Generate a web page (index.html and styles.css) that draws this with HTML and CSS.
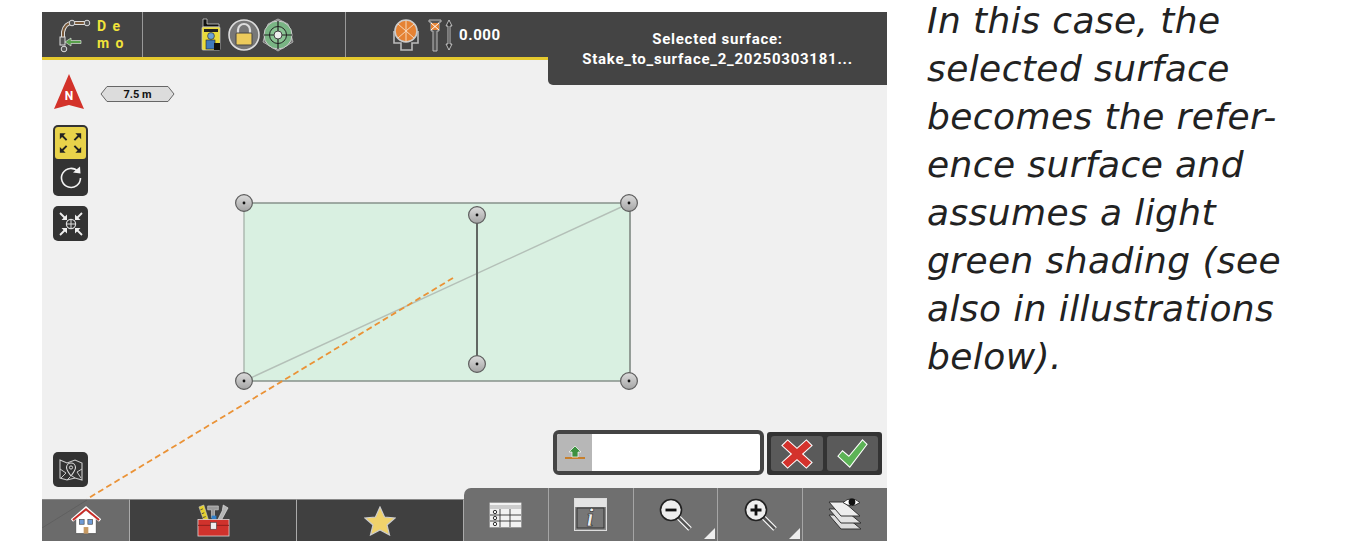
FILE: index.html
```html
<!DOCTYPE html>
<html lang="en">
<head>
    <meta charset="UTF-8">
    <title>Selected surface</title>
    <link rel="stylesheet" href="styles.css">
</head>
<body>
    <div class="page">
        <div class="app">
            <!-- Top status bar -->
            <div class="top-bar">
                <div class="top-cell job-cell">
                    <svg width="38" height="36" viewBox="0 0 38 36">
                        <path d="M29 6H14Q7 6 5 15V28" fill="none" stroke="#ddd" stroke-width="4"/>
                        <path d="M29 6H14Q7 6 5 15V28" fill="none" stroke="#7a5a3a" stroke-width="2"/>
                        <circle cx="29" cy="6" r="2.8" fill="#555" stroke="#ddd"/>
                        <circle cx="14" cy="6" r="2.8" fill="#555" stroke="#ddd"/>
                        <rect x="2" y="20" width="5" height="8" fill="#555" stroke="#ddd"/>
                        <circle cx="6" cy="32" r="2.8" fill="#555" stroke="#ddd"/>
                        <path d="M23 23.500H13V21L7 25L13 29V26.500H23Z" fill="#58a04c" stroke="#ddd" stroke-width=".7"/>
                    </svg>
                    <span class="job-name">D e<br>m o</span>
                </div>
                <div class="top-cell device-cell">
                    <svg class="device-icon" width="24" height="33" viewBox="0 0 24 33">
                        <path d="M4 1H8V6H20V9H4Z" fill="#111" stroke="#ddd" stroke-width=".7"/>
                        <rect x="3" y="9" width="18" height="23" rx="1" fill="#eadb3a" stroke="#ccc" stroke-width=".7"/>
                        <rect x="5" y="11" width="14" height="3" fill="#222"/>
                        <circle cx="12" cy="18" r="3.4" fill="#6aa3d8" stroke="#333" stroke-width=".7"/>
                        <rect x="7" y="22" width="9" height="9" fill="#3f79bd" stroke="#222" stroke-width=".6"/>
                        <rect x="15" y="25" width="6" height="7" fill="#111"/>
                    </svg>
                    <svg width="32" height="32" viewBox="0 0 32 32">
                        <circle cx="16" cy="16" r="15" fill="#777" stroke="#ddd" stroke-width="1.6"/>
                        <path d="M10 15V11a6 6 0 0 1 12 0v4" fill="none" stroke="#ddd" stroke-width="2.2"/>
                        <rect x="8" y="14" width="16" height="12" rx="1" fill="#eccb5c" stroke="#444"/>
                    </svg>
                    <svg width="32" height="34" viewBox="0 0 32 34">
                        <path d="M16 1L26 6L31 24L16 33L1 24L6 6Z" fill="#777" stroke="#aaa"/>
                        <circle cx="16" cy="17" r="14" fill="#79b584" stroke="#ccc"/>
                        <circle cx="16" cy="17" r="8.5" fill="#8ac494" stroke="#222"/>
                        <path d="M2 17H30M16 3V31" stroke="#222" stroke-width="1.2"/>
                        <circle cx="16" cy="17" r="4" fill="#eee" stroke="#444"/>
                    </svg>
                </div>
                <div class="top-cell target-cell">
                    <svg width="30" height="34" viewBox="0 0 30 34">
                        <path d="M3 13V25H10V32H21V25H27V13" fill="none" stroke="#bbb" stroke-width="1.6"/>
                        <circle cx="15" cy="13" r="11" fill="#e58233" stroke="#ccc" stroke-width="1.6"/>
                        <path d="M7 6L23 20M23 6L7 20M15 2V24" stroke="#f6d9bd" stroke-width="1"/>
                    </svg>
                    <svg class="pole" width="14" height="34" viewBox="0 0 14 34">
                        <path d="M1 2H13V4H11V13H9V33H5V13H3V4H1Z" fill="#555" stroke="#bbb"/>
                        <rect x="3" y="5" width="8" height="7" fill="#e58233"/>
                        <path d="M3 5L11 12M11 5L3 12" stroke="#fff"/>
                    </svg>
                    <svg width="8" height="32" viewBox="0 0 8 32">
                        <path d="M4 1L7 7H5V25H7L4 31L1 25H3V7H1Z" fill="#333" stroke="#ddd" stroke-width=".8"/>
                    </svg>
                    <span class="height-value">0.000</span>
                </div>
            </div>

            <!-- Selected surface popup -->
            <div class="surface-popup">
                <div>Selected surface:</div>
                <div>Stake_to_surface_2_20250303181...</div>
            </div>

            <!-- Map canvas -->
            <div class="map">
                <svg class="map-drawing" width="845" height="439" viewBox="42 60 845 439">
                    <defs>
                        <linearGradient id="node-fill" x1="0" y1="0" x2="0" y2="1">
                            <stop offset="0" stop-color="#dcdcdc"/>
                            <stop offset="1" stop-color="#a4a4a4"/>
                        </linearGradient>
                    </defs>
                    <rect x="244" y="203" width="386" height="178" fill="#d9f0e1"/>
                    <path d="M244 203H630V381H244" fill="none" stroke="#87918b" stroke-width="1.4"/>
                    <path d="M244 203V381" stroke="#a9b5ad" stroke-width="1.4"/>
                    <path d="M630 203V381" stroke="#8a938d" stroke-width="1.2"/>
                    <path d="M244 381L630 203" stroke="#b4c0b8" stroke-width="1.4"/>
                    <path d="M477 215V364" stroke="#616763" stroke-width="2"/>
                    <path d="M453 278L87 499" stroke="#ea9236" stroke-width="1.8" stroke-dasharray="6 3.5"/>
                    <g fill="url(#node-fill)" stroke="#5d5d5d" stroke-width="1.2">
                        <circle cx="244" cy="203" r="8.4"/>
                        <circle cx="629" cy="203" r="8.4"/>
                        <circle cx="477" cy="215" r="8.4"/>
                        <circle cx="477" cy="364" r="8.4"/>
                        <circle cx="244" cy="381" r="8.4"/>
                        <circle cx="629" cy="381" r="8.4"/>
                    </g>
                    <g fill="#111">
                        <circle cx="244" cy="203" r="1.4"/>
                        <circle cx="629" cy="203" r="1.4"/>
                        <circle cx="477" cy="215" r="1.4"/>
                        <circle cx="477" cy="364" r="1.4"/>
                        <circle cx="244" cy="381" r="1.4"/>
                        <circle cx="629" cy="381" r="1.4"/>
                    </g>
                </svg>

                <svg class="north-arrow" width="32" height="36" viewBox="0 0 32 36">
                    <path d="M16 1L31 36L16 32L1 36Z" fill="#d3322a"/>
                    <text x="16" y="27" class="north-letter" text-anchor="middle">N</text>
                </svg>

                <svg class="scale-bar" width="75" height="16" viewBox="0 0 75 16">
                    <path d="M1 8L7 .5H68L74 8L68 15.500H7Z" fill="#dcdcdc" stroke="#666"/>
                    <text x="37.500" y="12" class="scale-label" text-anchor="middle">7.5 m</text>
                </svg>

                <div class="tool-group zoom-tools">
                    <div class="tool-active">
                        <svg width="32" height="30" viewBox="0 0 32 30">
                            <path d="M7 7L12 12M25 7L20 12M7 23L12 18M25 23L20 18" stroke="#222" stroke-width="2"/>
                            <path d="M5 5H11L5 11ZM27 5H21L27 11ZM5 25H11L5 19ZM27 25H21L27 19Z" fill="#222"/>
                        </svg>
                    </div>
                    <div class="tool-plain">
                        <svg width="26" height="26" viewBox="0 0 26 26">
                            <path d="M20 6.5A9.5 9.5 0 1 0 22.5 13" fill="none" stroke="#f2f2f2" stroke-width="1.6"/>
                            <path d="M15 7.5L22.5 8.5L22 1.5Z" fill="#f2f2f2"/>
                        </svg>
                    </div>
                </div>

                <div class="tool-group center-tool">
                    <svg width="30" height="30" viewBox="0 0 30 30">
                        <path d="M4 4L10 10M26 4L20 10M4 26L10 20M26 26L20 20" stroke="#eee" stroke-width="1.8"/>
                        <path d="M11 11H5.5L11 5.5ZM19 11H24.5L19 5.5ZM11 19H5.5L11 24.5ZM19 19H24.5L19 24.5Z" fill="#eee"/>
                        <circle cx="15" cy="15" r="4.6" fill="none" stroke="#ddd" stroke-width="1.2"/>
                        <path d="M15 10V20M10 15H20" stroke="#ddd"/>
                    </svg>
                </div>

                <div class="tool-group map-tool">
                    <svg width="26" height="26" viewBox="0 0 26 26">
                        <path d="M2 3L9 6L17 3L24 6V23L17 21L9 23L2 21Z" fill="none" stroke="#ccc" stroke-width="1.1"/>
                        <path d="M2 12L8 16L3 21M24 12L19 15L23 21M9 23L12 20M17 21L14 19" fill="none" stroke="#ccc"/>
                        <path d="M13 19C10 15 8.5 13 8.5 10.5a4.5 4.5 0 0 1 9 0C17.5 13 16 15 13 19Z" fill="#333" stroke="#ddd" stroke-width="1.1"/>
                        <circle cx="13" cy="10.5" r="1.6" fill="none" stroke="#ddd"/>
                    </svg>
                </div>

                <div class="code-input">
                    <div class="code-icon">
                        <svg width="22" height="16" viewBox="0 0 22 16">
                            <path d="M1 13H21" stroke="#c77f2c" stroke-width="2"/>
                            <path d="M11 1L17 7H14V12H8V7H5Z" fill="#3d9140" stroke="#fff" stroke-width=".7"/>
                        </svg>
                    </div>
                </div>

                <div class="confirm-group">
                    <div class="confirm-btn">
                        <svg width="34" height="32" viewBox="0 0 36 34">
                            <path d="M8 2L18 11L28 2L34 8L24 17L34 26L28 32L18 23L8 32L2 26L12 17L2 8Z" fill="#d4322c" stroke="#fff" stroke-width="1.1"/>
                        </svg>
                    </div>
                    <div class="confirm-btn">
                        <svg width="31" height="31" viewBox="0 0 34 34">
                            <path d="M28 2L33 7L14 32L1 20L6 14L13 20Z" fill="#5cb356" stroke="#fff" stroke-width="1.1"/>
                        </svg>
                    </div>
                </div>
            </div>

            <!-- Bottom bar -->
            <div class="bottom-bar">
                <div class="nav-cell nav-home">
                    <svg class="home-trace" width="87" height="28" viewBox="0 0 87 28">
                        <path d="M45 0L0 28" stroke="#606060"/>
                    </svg>
                    <svg class="home-icon" width="30" height="29" viewBox="0 0 32 30">
                        <path d="M5 13L16 4L27 13V29H5Z" fill="#fff" stroke="#555"/>
                        <path d="M1 15L16 2L31 15" fill="none" stroke="#fff" stroke-width="3.6"/>
                        <path d="M2 14.500L16 3L30 14.500" fill="none" stroke="#c92a25" stroke-width="2"/>
                        <rect x="9" y="14" width="5" height="5" fill="#6f9bd6" stroke="#444" stroke-width=".7"/>
                        <rect x="18" y="14" width="5" height="5" fill="#6f9bd6" stroke="#444" stroke-width=".7"/>
                        <rect x="13.500" y="22" width="5" height="7" fill="#c79a63"/>
                    </svg>
                </div>
                <div class="nav-cell nav-wide">
                    <svg width="33" height="33" viewBox="0 0 34 34">
                        <path d="M2 3L7 1L12 17H7Z" fill="#e6d22e" stroke="#ccc" stroke-width=".6"/>
                        <path d="M3.500 6L6 5M5 10L7.500 9M6 14L9 13" stroke="#333" stroke-width=".8"/>
                        <path d="M11 2H22V6H18V14H15V6H11Z" fill="#9a9a9a" stroke="#ddd" stroke-width=".6"/>
                        <path d="M27 1L32 4L25 17H21L26 7Z" fill="#b5b5b5" stroke="#eee" stroke-width=".6"/>
                        <rect x="15" y="12" width="5" height="5" fill="#2f7fc8"/>
                        <rect x="1" y="16" width="32" height="17" fill="#d0322c" stroke="#ddd" stroke-width=".8"/>
                        <path d="M1 22H33" stroke="#8c1f1b"/>
                        <rect x="14" y="19" width="6" height="7" fill="#eee" stroke="#444" stroke-width=".6"/>
                    </svg>
                </div>
                <div class="nav-cell nav-wide">
                    <svg width="32" height="30" viewBox="0 0 32 30">
                        <path d="M16 1L20.500 11L31 12L23 19L25.500 29L16 24L6.500 29L9 19L1 12L11.500 11Z" fill="#f0d26b" stroke="#ccc" stroke-width="1.200"/>
                    </svg>
                </div>
                <div class="nav-panel">
                    <div class="panel-cell">
                        <svg width="33" height="26" viewBox="0 0 33 26">
                            <rect x=".5" y=".5" width="32" height="25" rx="1" fill="#f2f2f2" stroke="#999"/>
                            <path d="M1 5H32" stroke="#ccc" stroke-width="4"/>
                            <path d="M1 13H32M1 19H32M11 7V25M21 7V25" stroke="#333" stroke-width=".9"/>
                            <circle cx="6" cy="10" r="1.700" fill="none" stroke="#333"/>
                            <circle cx="6" cy="16" r="1.700" fill="none" stroke="#333"/>
                            <circle cx="6" cy="22" r="1.700" fill="none" stroke="#333"/>
                        </svg>
                    </div>
                    <div class="panel-cell">
                        <svg width="33" height="33" viewBox="0 0 33 33">
                            <rect x=".5" y=".5" width="32" height="32" fill="#8a8a8a" stroke="#ddd"/>
                            <rect x="1" y="1" width="31" height="8" fill="#e4e4e4"/>
                            <rect x="3" y="10" width="27" height="20" fill="#777" stroke="#333"/>
                            <text x="16" y="28" class="info-letter" text-anchor="middle">i</text>
                        </svg>
                    </div>
                    <div class="panel-cell panel-menu">
                        <svg width="33" height="33" viewBox="0 0 33 33">
                            <path d="M19 19L31 31" stroke="#fff" stroke-width="5"/>
                            <path d="M19 19L31 31" stroke="#555" stroke-width="2.600"/>
                            <circle cx="12" cy="12" r="10.500" fill="#eee" stroke="#222" stroke-width="1.600"/>
                            <path d="M6.500 12H17.500" stroke="#111" stroke-width="2.800"/>
                        </svg>
                    </div>
                    <div class="panel-cell panel-menu">
                        <svg width="33" height="33" viewBox="0 0 33 33">
                            <path d="M19 19L31 31" stroke="#fff" stroke-width="5"/>
                            <path d="M19 19L31 31" stroke="#555" stroke-width="2.600"/>
                            <circle cx="12" cy="12" r="10.500" fill="#eee" stroke="#222" stroke-width="1.600"/>
                            <path d="M6.500 12H17.500M12 6.500V17.500" stroke="#111" stroke-width="2.800"/>
                        </svg>
                    </div>
                    <div class="panel-cell">
                        <svg width="34" height="33" viewBox="0 0 34 33">
                            <path d="M1 17L16 17L33 31H13Z" fill="#ddd" stroke="#333"/>
                            <path d="M1 11L16 11L33 25H13Z" fill="#e4e4e4" stroke="#333"/>
                            <path d="M1 4L16 4L32 18H13Z" fill="#eee" stroke="#333"/>
                            <path d="M15 4.500Q23 -3 32 4.500Q23 11 15 4.500Z" fill="#fff" stroke="#333"/>
                            <circle cx="24" cy="4" r="3.400" fill="#111"/>
                        </svg>
                    </div>
                </div>
            </div>
        </div>

        <p class="note">In this case, the<br>selected surface<br>becomes the refer-<br>ence surface and<br>assumes a light<br>green shading (see<br>also in illustrations<br>below).</p>
    </div>
</body>
</html>
```

FILE: styles.css
```css
body {
    margin: 0;
    background-color: #fff;
    font-family: Roboto, sans-serif;
}
.page {
    display: flex;
    align-items: flex-start;
    padding: 12px 0 0 42px;
}
.app {
    position: relative;
    display: flex;
    flex-direction: column;
    flex: none;
    width: 845px;
    height: 529px;
    background-color: #f0f0f0;
}

/* top bar */
.top-bar {
    display: flex;
    flex: none;
    height: 45px;
    background-color: #444;
    border-bottom: 3px solid #e5c92e;
}
.top-cell {
    display: flex;
    align-items: center;
    box-sizing: border-box;
    border-right: 1px solid #999;
}
.job-cell {
    width: 101px;
    padding-left: 16px;
    gap: 1px;
}
.job-name {
    color: #f2e33a;
    font-size: 14px;
    font-weight: 700;
    line-height: 17px;
    letter-spacing: 1.5px;
}
.device-cell {
    width: 203px;
    padding-left: 56px;
    gap: 2px;
}
.device-icon {
    margin-right: 3px;
}
.target-cell {
    width: 203px;
    padding-left: 45px;
    gap: 3px;
}
.height-value {
    margin-left: 3px;
    color: #fff;
    font-size: 15px;
    font-weight: 700;
    letter-spacing: 0.6px;
}
.pole {
    margin-left: 4px;
}
.surface-popup {
    position: absolute;
    top: 0;
    right: 0;
    z-index: 2;
    box-sizing: border-box;
    width: 339px;
    height: 73px;
    padding-top: 17px;
    background-color: #444;
    border-radius: 0 0 0 5px;
    color: #fff;
    font-size: 15px;
    font-weight: 700;
    line-height: 20px;
    letter-spacing: 0.75px;
    text-align: center;
}

/* map canvas */
.map {
    position: relative;
    flex: 1;
}
.map-drawing {
    position: absolute;
    left: 0;
    top: 0;
}
.north-arrow {
    position: absolute;
    left: 11px;
    top: 13px;
}
.north-letter {
    fill: #fff;
    font-family: Roboto, sans-serif;
    font-size: 12px;
    font-weight: 700;
}
.scale-bar {
    position: absolute;
    left: 58px;
    top: 26px;
}
.scale-label {
    fill: #111;
    font-family: Roboto, sans-serif;
    font-size: 11px;
    font-weight: 700;
}
.tool-group {
    position: absolute;
    left: 11px;
    width: 35px;
    background-color: #333;
    border-radius: 5px;
}
.zoom-tools {
    top: 65px;
    height: 71px;
}
.tool-active {
    display: flex;
    align-items: center;
    justify-content: center;
    height: 32px;
    margin: 2px 2px 0;
    background-color: #e8d24a;
    border-radius: 3px;
}
.tool-plain {
    display: flex;
    align-items: center;
    justify-content: center;
    height: 37px;
}
.center-tool,
.map-tool {
    display: flex;
    align-items: center;
    justify-content: center;
    height: 35px;
}
.center-tool {
    top: 146px;
}
.map-tool {
    top: 392px;
}
.code-input {
    position: absolute;
    left: 511px;
    top: 370px;
    box-sizing: border-box;
    width: 211px;
    height: 45px;
    background-color: #fff;
    border: 4px solid #444;
    border-radius: 6px;
    overflow: hidden;
}
.code-icon {
    display: flex;
    align-items: center;
    justify-content: center;
    width: 35px;
    height: 100%;
    background-color: #b7b7b7;
}
.confirm-group {
    position: absolute;
    left: 725px;
    top: 372px;
    display: flex;
    gap: 4px;
    box-sizing: border-box;
    width: 115px;
    height: 43px;
    padding: 4px;
    background-color: #333;
    border-radius: 3px;
}
.confirm-btn {
    display: flex;
    flex: 1;
    align-items: center;
    justify-content: center;
    background-color: #5a5a5a;
    border-radius: 3px;
}

/* bottom bar */
.bottom-bar {
    position: relative;
    display: flex;
    flex: none;
    height: 42px;
}
.nav-cell {
    display: flex;
    align-items: center;
    justify-content: center;
    box-sizing: border-box;
    height: 100%;
    background-color: #404040;
    border-top: 1px solid #888;
    border-right: 1px solid #aaa;
}
.nav-home {
    position: relative;
    width: 88px;
    background-color: #6b6b6b;
}
.home-trace {
    position: absolute;
    left: 0;
    top: 0;
}
.home-icon {
    position: relative;
}
.nav-wide {
    width: 167px;
}
.nav-panel {
    position: absolute;
    right: 0;
    bottom: 0;
    display: flex;
    width: 423px;
    height: 53px;
    background-color: #6f6f6f;
    border-radius: 7px 0 0 0;
}
.panel-cell {
    position: relative;
    display: flex;
    flex: 1;
    align-items: center;
    justify-content: center;
    border-right: 1px solid #a5a5a5;
}
.panel-cell:last-child {
    border-right: none;
}
.panel-menu::after {
    content: "";
    position: absolute;
    right: 2px;
    bottom: 2px;
    width: 0;
    height: 0;
    border-left: 11px solid transparent;
    border-bottom: 11px solid #eee;
}
.info-letter {
    fill: #eee;
    stroke: #222;
    stroke-width: 0.6px;
    font-family: "Liberation Serif", serif;
    font-size: 26px;
    font-style: italic;
    font-weight: 700;
}

/* side text */
.note {
    margin: -15px 0 0 40px;
    color: #222;
    font-family: "DejaVu Sans", sans-serif;
    font-size: 36px;
    font-style: italic;
    line-height: 48px;
    letter-spacing: 0.4px;
}
```
